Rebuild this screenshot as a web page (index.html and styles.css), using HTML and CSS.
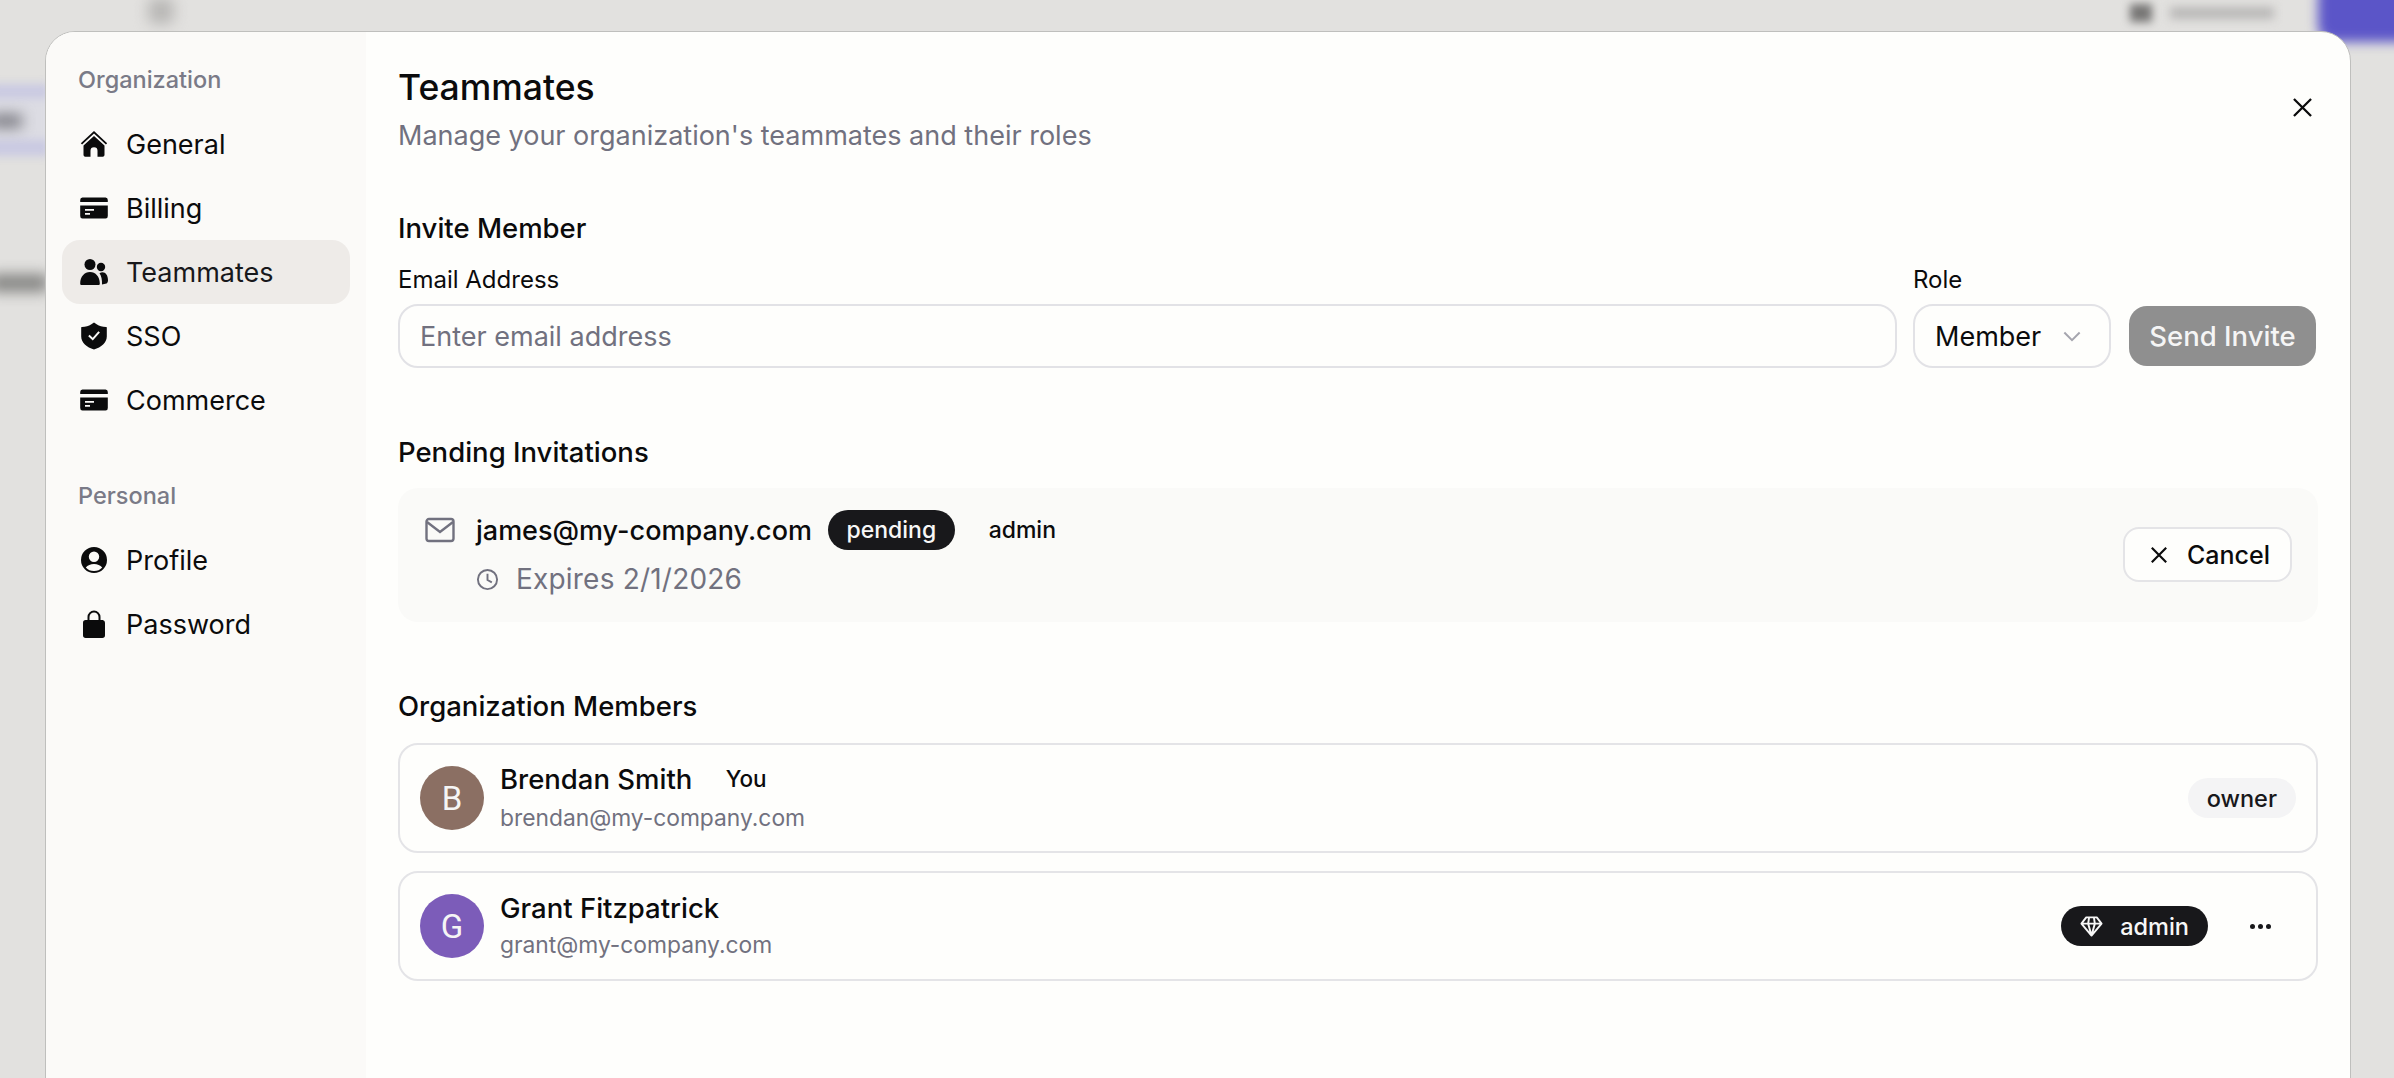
FILE: index.html
```html
<!DOCTYPE html>
<html lang="en">
<head>
  <meta charset="UTF-8">
  <title>Teammates</title>
  <link rel="stylesheet" href="styles.css">
</head>
<body>
  <!-- blurred page behind the dialog -->
  <div class="backdrop">
    <span class="blur blur-icon"></span>
    <span class="blur blur-tools"></span>
    <span class="blur blur-tools-icon"></span>
    <span class="blur blur-cta"></span>
    <span class="blur blur-band"></span>
    <span class="blur blur-text1"></span>
    <span class="blur blur-text2"></span>
  </div>

  <div class="modal">
    <aside class="sidebar">
      <div class="nav-title">Organization</div>
      <a class="nav-item">
        <svg class="nav-icon" viewBox="0 0 28 28"><path d="M14 1 .8 13.200l1.300 1.300L14 3.600l11.900 10.900 1.300-1.300z"/><path d="M14 6 3.500 15.600V25a1.800 1.800 0 0 0 1.800 1.800H10.500v-6a3.500 3.500 0 0 1 7 0v6h5.200A1.800 1.800 0 0 0 24.500 25v-9.400z"/></svg>
        General
      </a>
      <a class="nav-item">
        <svg class="nav-icon" viewBox="0 0 28 28"><path fill-rule="evenodd" d="M3 3.500h22A2.500 2.500 0 0 1 27.800 6v2H.2V6A2.500 2.500 0 0 1 3 3.500zM.2 11.500h27.600V22A2.500 2.500 0 0 1 25 24.500H3A2.500 2.500 0 0 1 .2 22zM5 15v1.800h9V15zm0 4v1.800h5V19z"/></svg>
        Billing
      </a>
      <a class="nav-item active">
        <svg class="nav-icon" viewBox="0 0 28 28"><circle cx="10" cy="6.500" r="5.500"/><circle cx="21" cy="9" r="4.200"/><path d="M.2 25.500C.2 18.500 4.500 14 10 14s9.800 4.500 9.800 11.500c0 1-.5 1.500-1.500 1.500H1.700c-1 0-1.500-.5-1.500-1.500z"/><path d="M19.500 15.300c1-.8 2-1 3-1 3.200 0 5.500 3 5.500 8 0 1.600-.6 2.700-1.500 3.200l-4.500 1c.2-4.500-.5-8.500-2.500-11.200z"/></svg>
        Teammates
      </a>
      <a class="nav-item">
        <svg class="nav-icon" viewBox="0 0 28 28"><path fill-rule="evenodd" d="M14 .5 17 2.600c2 1.300 5.500 2.300 9 2.500l.8.1v9.300c0 6-5.500 10.800-12.800 13-7.300-2.200-12.800-7-12.800-13V5.200l.8-.1c3.500-.2 7-1.200 9-2.500zm5.900 10.100-1.500-1.300-5.700 6.400-3.100-2.900-1.400 1.500 4.600 4.300z"/></svg>
        SSO
      </a>
      <a class="nav-item">
        <svg class="nav-icon" viewBox="0 0 28 28"><path fill-rule="evenodd" d="M3 3.500h22A2.500 2.500 0 0 1 27.800 6v2H.2V6A2.500 2.500 0 0 1 3 3.500zM.2 11.500h27.600V22A2.500 2.500 0 0 1 25 24.500H3A2.500 2.500 0 0 1 .2 22zM5 15v1.800h9V15zm0 4v1.800h5V19z"/></svg>
        Commerce
      </a>

      <div class="nav-title personal">Personal</div>
      <a class="nav-item">
        <svg class="nav-icon" viewBox="0 0 28 28"><path fill-rule="evenodd" d="M14 1a13 13 0 1 0 0 26 13 13 0 0 0 0-26zm0 4.500a5.200 5.200 0 1 1 0 10.400 5.200 5.200 0 0 1 0-10.400zM5.800 21.500c1.800-2.300 4.800-3.500 8.200-3.500s6.400 1.200 8.200 3.500A10.800 10.800 0 0 1 14 25a10.800 10.800 0 0 1-8.200-3.500z"/></svg>
        Profile
      </a>
      <a class="nav-item">
        <svg class="nav-icon" viewBox="0 0 28 28"><path fill-rule="evenodd" d="M7.500 10V7a6.500 6.500 0 0 1 13 0v3h2.300A2.700 2.700 0 0 1 25 12.700v12.600a2.700 2.700 0 0 1-2.700 2.700H5.700A2.700 2.700 0 0 1 3 25.300V12.700A2.700 2.700 0 0 1 5.700 10zm2 0h9V7a4.500 4.500 0 0 0-9 0z"/></svg>
        Password
      </a>
    </aside>

    <main class="content">
      <button class="close-btn">
        <svg viewBox="0 0 20 20"><path d="M1 1l18 18M19 1 1 19"/></svg>
      </button>
      <h1 class="page-title">Teammates</h1>
      <p class="page-sub">Manage your organization's teammates and their roles</p>

      <h2 class="section-title invite-title">Invite Member</h2>
      <div class="invite-row">
        <div class="field field-email">
          <label class="field-label">Email Address</label>
          <div class="input">Enter email address</div>
        </div>
        <div class="field">
          <label class="field-label">Role</label>
          <div class="select">
            Member
            <svg class="chevron" viewBox="0 0 20 12"><path d="M1.500 1.500 10 10l8.500-8.500"/></svg>
          </div>
        </div>
        <button class="send-btn">Send Invite</button>
      </div>

      <h2 class="section-title pending-title">Pending Invitations</h2>
      <div class="pending-card">
        <svg class="mail-icon" viewBox="0 0 30 26"><rect x="1.500" y="2" width="27" height="22" rx="2.500"/><path d="M2 5l13 10L28 5"/></svg>
        <div class="pending-info">
          <div class="pending-top">
            <span class="pending-email">james@my-company.com</span>
            <span class="badge badge-dark">pending</span>
            <span class="badge-plain">admin</span>
          </div>
          <div class="pending-expires">
            <svg class="clock-icon" viewBox="0 0 24 24"><circle cx="12" cy="12" r="10"/><path d="M12 6v6.500l4.500 2.500"/></svg>
            Expires 2/1/2026
          </div>
        </div>
        <button class="cancel-btn">
          <svg viewBox="0 0 20 20"><path d="M2 2l16 16M18 2 2 18"/></svg>
          Cancel
        </button>
      </div>

      <h2 class="section-title members-title">Organization Members</h2>
      <div class="member-row">
        <div class="avatar avatar-brown">B</div>
        <div class="member-info">
          <div class="member-name">Brendan Smith <span class="you">You</span></div>
          <div class="member-email">brendan@my-company.com</div>
        </div>
        <span class="badge badge-light">owner</span>
      </div>
      <div class="member-row">
        <div class="avatar avatar-purple">G</div>
        <div class="member-info">
          <div class="member-name">Grant Fitzpatrick</div>
          <div class="member-email">grant@my-company.com</div>
        </div>
        <span class="badge badge-dark badge-icon">
          <svg class="gem-icon" viewBox="0 0 24 24"><path d="M6.500 2.500h11L22.500 9 12 21.500 1.500 9zM1.500 9h21M8.500 9 12 21.500 15.500 9M9.500 2.500 8.500 9M14.500 2.500l1 6.500"/></svg>
          admin
        </span>
        <button class="more-btn"><i></i><i></i><i></i></button>
      </div>
    </main>
  </div>
</body>
</html>
```

FILE: styles.css
```css
* {
  margin: 0;
  padding: 0;
  box-sizing: border-box;
}

html, body {
  height: 100%;
  overflow: hidden;
}

body {
  position: relative;
  background: #e2e1df;
  padding: 31px 43px 0 45px;
  font-family: Inter, "Liberation Sans", sans-serif;
  color: #0b0b0c;
}

/* backdrop */
.backdrop {
  position: absolute;
  inset: 0;
  overflow: hidden;
}

.blur {
  position: absolute;
  display: block;
  filter: blur(7px);
}

.blur-icon {
  left: 148px;
  top: -2px;
  width: 26px;
  height: 26px;
  background: #b9b8b6;
  border-radius: 6px;
}

.blur-tools-icon {
  left: 2130px;
  top: 4px;
  width: 22px;
  height: 18px;
  background: #777675;
  filter: blur(4px);
}

.blur-tools {
  left: 2170px;
  top: 7px;
  width: 104px;
  height: 12px;
  background: #b9b8b7;
  filter: blur(5px);
}

.blur-cta {
  left: 2318px;
  top: -20px;
  width: 110px;
  height: 62px;
  background: #5b55c8;
  border-radius: 16px;
  filter: blur(6px);
}

.blur-band {
  left: -10px;
  top: 84px;
  width: 60px;
  height: 72px;
  background: #dcdce3;
  border-top: 14px solid #c9c9e2;
  border-bottom: 16px solid #c9c9e2;
  filter: blur(5px);
}

.blur-text1 {
  left: -10px;
  top: 114px;
  width: 32px;
  height: 14px;
  background: #7f7f86;
}

.blur-text2 {
  left: -10px;
  top: 274px;
  width: 58px;
  height: 18px;
  background: #868684;
}

/* dialog */
.modal {
  position: relative;
  display: flex;
  height: 1100px;
  background: #fefefc;
  border: 1px solid #bfbfbd;
  border-radius: 30px;
  overflow: hidden;
}

.sidebar {
  width: 320px;
  flex-shrink: 0;
  background: #fbfaf8;
  padding: 32px 16px 0;
}

.nav-title {
  padding-left: 16px;
  height: 32px;
  line-height: 32px;
  font-size: 23.5px;
  font-weight: 450;
  color: #7a7a87;
  margin-bottom: 16px;
}

.nav-title.personal {
  margin-top: 48px;
}

.nav-item {
  display: flex;
  align-items: center;
  gap: 18px;
  height: 64px;
  padding-left: 18px;
  border-radius: 18px;
  font-size: 27px;
}

.nav-item.active {
  background: #eeebe8;
  color: #18181b;
}

.nav-icon {
  width: 28px;
  height: 28px;
  fill: #0b0b0c;
  flex-shrink: 0;
}

.content {
  position: relative;
  flex: 1;
  padding: 32px 32px 0;
}

.close-btn {
  position: absolute;
  top: 66px;
  right: 38px;
  width: 19px;
  height: 19px;
  border: none;
  background: none;
}

.close-btn svg, .cancel-btn svg {
  display: block;
  width: 100%;
  height: 100%;
  fill: none;
  stroke: #0b0b0c;
  stroke-width: 2.4;
}

.page-title {
  font-size: 35.5px;
  font-weight: 450;
  line-height: 48px;
}

.page-sub {
  margin-top: 4px;
  font-size: 27px;
  line-height: 40px;
  color: #71717f;
}

.section-title {
  font-size: 27.5px;
  font-weight: 450;
  line-height: 40px;
}

.invite-title {
  margin-top: 52px;
}

.invite-row {
  display: flex;
  align-items: flex-end;
  gap: 16px;
  margin: 14px 2px 0 0;
}

.field-email {
  flex: 1;
}

.field-label {
  display: block;
  font-size: 24px;
  font-weight: 400;
  line-height: 36px;
  margin-bottom: 6px;
}

.input, .select {
  height: 64px;
  display: flex;
  align-items: center;
  font-size: 27px;
  background: #fefefc;
  border: 2px solid #e2e2e6;
  border-radius: 20px;
  padding: 0 20px;
}

.input {
  color: #71717f;
}

.select {
  width: 198px;
  padding-right: 28px;
  justify-content: space-between;
}

.chevron {
  width: 18px;
  height: 11px;
  fill: none;
  stroke: #a5a5ae;
  stroke-width: 2.2;
}

.send-btn {
  width: 187px;
  height: 60px;
  margin: 0 0 2px 2px;
  border: none;
  border-radius: 18px;
  background: #8f8f8f;
  color: #f5f5f5;
  font-family: inherit;
  font-size: 27.5px;
  font-weight: 450;
}

.pending-title {
  margin-top: 64px;
}

.pending-card {
  display: flex;
  align-items: flex-start;
  height: 134px;
  margin-top: 16px;
  padding: 22px 26px 0 27px;
  background: #fafaf8;
  border-radius: 20px;
}

.mail-icon {
  width: 30px;
  height: 26px;
  margin-top: 7px;
  fill: none;
  stroke: #71717f;
  stroke-width: 2.4;
  flex-shrink: 0;
}

.pending-info {
  flex: 1;
  margin-left: 21px;
}

.pending-top {
  display: flex;
  align-items: center;
  height: 40px;
}

.pending-email {
  font-size: 27px;
  font-weight: 450;
}

.badge {
  display: inline-flex;
  align-items: center;
  height: 40px;
  padding: 0 19px;
  border-radius: 20px;
  font-size: 23.5px;
  font-weight: 450;
}

.badge-dark {
  background: #18181b;
  color: #f7f7f7;
}

.badge-light {
  background: #f4f4f5;
  color: #18181b;
}

.pending-top .badge {
  margin-left: 16px;
  font-size: 23px;
  padding: 0 18.500px;
}

.badge-plain {
  font-size: 23px;
  font-weight: 450;
  margin-left: 34px;
}

.pending-expires {
  display: flex;
  align-items: center;
  gap: 17px;
  margin-top: 9px;
  line-height: 40px;
  font-size: 28px;
  letter-spacing: 0.2px;
  color: #71717f;
}

.clock-icon {
  width: 23px;
  height: 23px;
  fill: none;
  stroke: #71717f;
  stroke-width: 2;
}

.cancel-btn {
  display: flex;
  align-items: center;
  gap: 19px;
  height: 55px;
  margin-top: 17px;
  padding: 0 20px 0 25px;
  background: #fefefc;
  border: 2px solid #e4e4e7;
  border-radius: 16px;
  font-family: inherit;
  font-size: 25px;
  font-weight: 450;
  color: #0b0b0c;
}

.cancel-btn svg {
  width: 18px;
  height: 18px;
}

.members-title {
  margin-top: 64px;
}

.member-row {
  display: flex;
  align-items: center;
  height: 110px;
  margin-top: 18px;
  padding: 0 20px;
  background: #fefefc;
  border: 2px solid #e4e4e7;
  border-radius: 20px;
}

.members-title + .member-row {
  margin-top: 17px;
}

.avatar {
  width: 64px;
  height: 64px;
  border-radius: 50%;
  flex-shrink: 0;
  display: flex;
  align-items: center;
  justify-content: center;
  color: #f5f5f5;
  font-family: Roboto, sans-serif;
  font-size: 33px;
}

.avatar-brown {
  background: #8b6f63;
}

.avatar-purple {
  background: #7c5cb9;
}

.member-info {
  flex: 1;
  margin-left: 16px;
  margin-top: -2px;
}

.member-name {
  font-size: 27.5px;
  font-weight: 450;
  line-height: 38px;
}

.you {
  font-size: 22.500px;
  margin-left: 26px;
  position: relative;
  top: -2px;
}

.member-email {
  font-size: 22.800px;
  color: #71717f;
  line-height: 34px;
  margin-top: 1px;
}

.badge-icon {
  gap: 17px;
}

.gem-icon {
  width: 23px;
  height: 23px;
  fill: none;
  stroke: #f7f7f7;
  stroke-width: 2;
  stroke-linejoin: round;
}

.more-btn {
  display: flex;
  gap: 3px;
  margin: 0 25px 0 42px;
  border: none;
  background: none;
}

.more-btn i {
  width: 5px;
  height: 5px;
  border-radius: 50%;
  background: #18181b;
}
```
